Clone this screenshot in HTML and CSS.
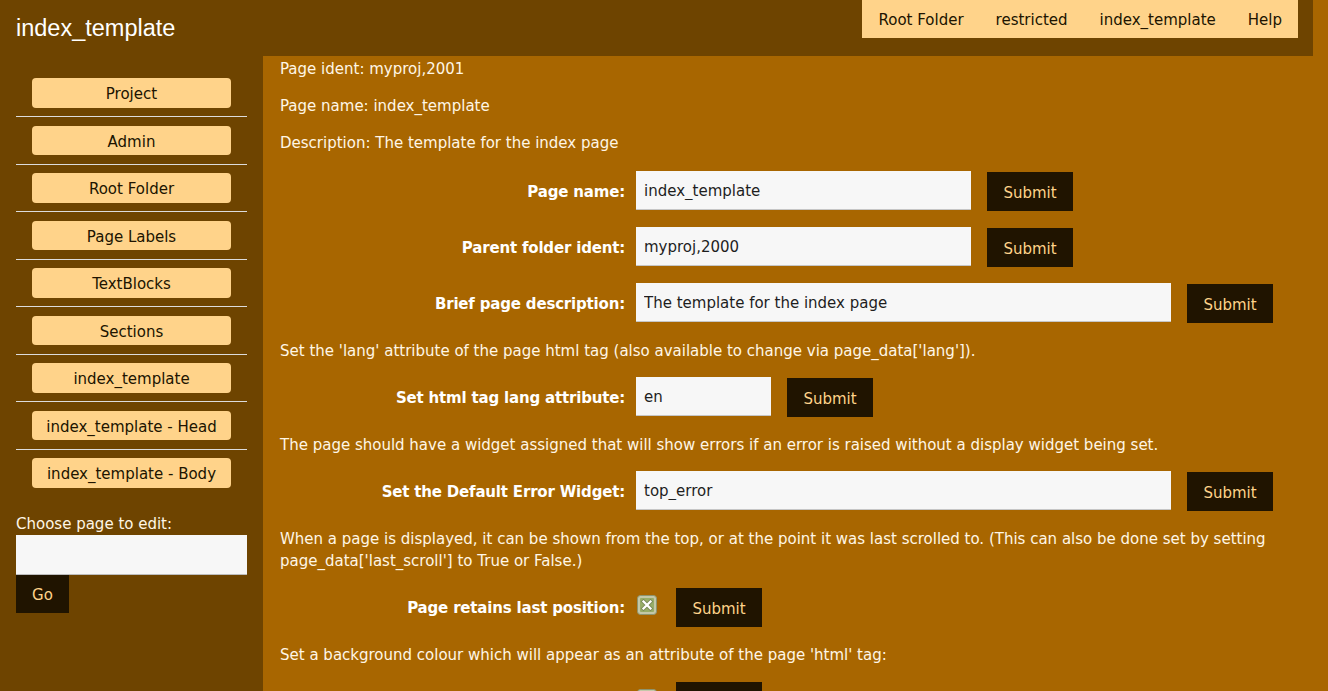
FILE: index.html
```html
<!DOCTYPE html>
<html lang="en">
<head>
<meta charset="utf-8">
<title>index_template</title>
<link rel="stylesheet" href="styles.css">
</head>
<body>
<header class="topbar">
  <div class="site-title">index_template</div>
  <nav class="topnav">
    <a class="topnav-item">Root Folder</a>
    <a class="topnav-item">restricted</a>
    <a class="topnav-item">index_template</a>
    <a class="topnav-item">Help</a>
  </nav>
</header>
<div class="layout">
  <aside class="sidebar">
    <ul class="side-list">
      <li class="side-item"><a class="side-btn">Project</a></li>
      <li class="side-item"><a class="side-btn">Admin</a></li>
      <li class="side-item"><a class="side-btn">Root Folder</a></li>
      <li class="side-item"><a class="side-btn">Page Labels</a></li>
      <li class="side-item"><a class="side-btn">TextBlocks</a></li>
      <li class="side-item"><a class="side-btn">Sections</a></li>
      <li class="side-item"><a class="side-btn">index_template</a></li>
      <li class="side-item"><a class="side-btn">index_template - Head</a></li>
      <li class="side-item"><a class="side-btn">index_template - Body</a></li>
    </ul>
    <div class="choose">
      <label class="choose-label">Choose page to edit:</label>
      <input class="choose-input" type="text">
      <button class="go-btn">Go</button>
    </div>
  </aside>
  <main class="content">
    <p class="first">Page ident: myproj,2001</p>
    <p>Page name: index_template</p>
    <p>Description: The template for the index page</p>
    <div class="form-row">
      <label class="form-label">Page name:</label>
      <input class="field field-md" type="text" value="index_template">
      <button class="submit">Submit</button>
    </div>
    <div class="form-row">
      <label class="form-label">Parent folder ident:</label>
      <input class="field field-md" type="text" value="myproj,2000">
      <button class="submit">Submit</button>
    </div>
    <div class="form-row">
      <label class="form-label">Brief page description:</label>
      <input class="field field-lg" type="text" value="The template for the index page">
      <button class="submit">Submit</button>
    </div>
    <p>Set the 'lang' attribute of the page html tag (also available to change via page_data['lang']).</p>
    <div class="form-row">
      <label class="form-label">Set html tag lang attribute:</label>
      <input class="field field-sm" type="text" value="en">
      <button class="submit">Submit</button>
    </div>
    <p>The page should have a widget assigned that will show errors if an error is raised without a display widget being set.</p>
    <div class="form-row">
      <label class="form-label">Set the Default Error Widget:</label>
      <input class="field field-lg" type="text" value="top_error">
      <button class="submit">Submit</button>
    </div>
    <p>When a page is displayed, it can be shown from the top, or at the point it was last scrolled to. (This can also be done set by setting page_data['last_scroll'] to True or False.)</p>
    <div class="form-row">
      <label class="form-label">Page retains last position:</label>
      <span class="checkbox"><svg width="20" height="20" viewBox="0 0 20 20"><rect x="0.5" y="0.5" width="19" height="19" rx="3" fill="#c3c8a8" stroke="#8d946f"/><rect x="3" y="3" width="14" height="14" rx="1" fill="#97ad68"/><path d="M6.5 6.5 L13.5 13.5 M13.5 6.5 L6.5 13.5" stroke="#7b8a58" stroke-width="4" stroke-linecap="square"/><path d="M6.5 6.5 L13.5 13.5 M13.5 6.5 L6.5 13.5" stroke="#ffffff" stroke-width="2.2" stroke-linecap="square"/></svg></span>
      <button class="submit">Submit</button>
    </div>
    <p>Set a background colour which will appear as an attribute of the page 'html' tag:</p>
    <div class="form-row">
      <label class="form-label">Set background colour:</label>
      <span class="checkbox"><svg width="20" height="20" viewBox="0 0 20 20"><rect x="0.5" y="0.5" width="19" height="19" rx="3" fill="#c3c8a8" stroke="#8d946f"/></svg></span>
      <button class="submit">Submit</button>
    </div>
  </main>
</div>
</body>
</html>
```
FILE: styles.css
```css
html, body {
  margin: 0;
  padding: 0;
}
body {
  background: #a86600;
  font-family: "DejaVu Sans", Verdana, sans-serif;
  font-size: 15px;
  color: #fff6e6;
  overflow: hidden;
}
.topbar {
  display: flex;
  justify-content: space-between;
  align-items: flex-start;
  height: 56px;
  background: #6e4400;
  margin-right: 15px;
}
.site-title {
  font-family: "Liberation Sans", Arial, sans-serif;
  font-size: 23.5px;
  line-height: 56px;
  padding-left: 16px;
  color: #ffffff;
}
.topnav {
  display: flex;
  height: 38px;
  align-items: flex-start;
  background: #ffd38a;
  margin-right: 15px;
}
.topnav-item {
  padding: 2px 16px 0;
  color: #201400;
  line-height: 36px;
}
.layout {
  display: flex;
  align-items: stretch;
}
.sidebar {
  width: 263px;
  flex: 0 0 263px;
  background: #6e4400;
  padding: 13.5px 16px 0;
  box-sizing: border-box;
  min-height: 635px;
}
.side-list {
  list-style: none;
  margin: 0;
  padding: 0;
}
.side-item {
  padding: 8.5px 16px;
  border-bottom: 1px solid #dcdcdc;
}
.side-item:last-child {
  border-bottom: none;
}
.side-btn {
  display: block;
  background: #ffd38a;
  color: #201400;
  border-radius: 4px;
  text-align: center;
  line-height: 19.5px;
  padding: 7px 0 3px;
}
.choose {
  margin-top: 17px;
}
.choose-label {
  display: block;
  line-height: 21px;
  padding-top: 1px;
  color: #fff6e6;
}
.choose-input {
  display: block;
  width: 100%;
  box-sizing: border-box;
  height: 40px;
  border: none;
  border-bottom: 1px solid #bdbdbd;
  background: #f7f7f7;
  margin: 0;
  padding: 0 8px;
  font: inherit;
}
.go-btn {
  display: block;
  width: 53px;
  height: 38px;
  border: none;
  background: #201400;
  color: #ffd38a;
  font: inherit;
  padding: 1px 0 0;
  margin: 0;
}
.content {
  flex: 1;
  padding: 2px 17px 0;
}
.content p {
  margin: 15px 0;
  line-height: 22px;
}
.content p.first {
  margin-top: 0;
}
.content .form-row + p {
  padding-top: 2px;
  margin-bottom: 14px;
}
.content .form-row + p + .form-row {
  margin-top: 14px;
}
.form-row {
  display: flex;
  align-items: flex-start;
  height: 40px;
  margin: 16px 0;
}
.form-label {
  width: 356px;
  flex: 0 0 356px;
  box-sizing: border-box;
  padding: 2px 11px 0 0;
  text-align: right;
  font-weight: bold;
  letter-spacing: -0.18px;
  line-height: 40px;
  color: #ffffff;
}
.field {
  height: 39px;
  box-sizing: border-box;
  margin: 1px 0 0;
  border: none;
  border-bottom: 1px solid #c6c6c6;
  background: #f7f7f7;
  padding: 2px 8px 0;
  font: inherit;
  color: #1e1e1e;
}
.field-sm { width: 135px; }
.field-md { width: 335px; }
.field-lg { width: 535px; }
.submit {
  margin: 2px 0 0 16px;
  width: 86px;
  height: 39px;
  border: none;
  background: #201400;
  color: #ffd38a;
  font: inherit;
  padding: 2px 0 0;
}
.checkbox {
  display: block;
  width: 20px;
  height: 20px;
  margin: 9px 3px 0 1px;
}
.checkbox svg {
  display: block;
}
```
